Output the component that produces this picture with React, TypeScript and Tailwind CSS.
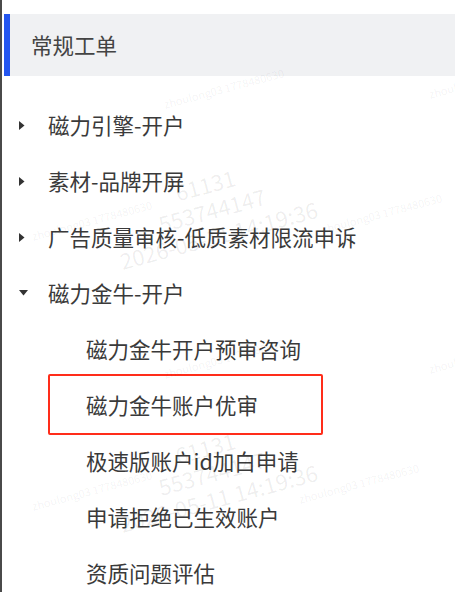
const font = { fontFamily: '"Noto Sans CJK SC", "Noto Sans", sans-serif' };

const groups = [
  { title: '磁力引擎-开户', open: false },
  { title: '素材-品牌开屏', open: false },
  { title: '广告质量审核-低质素材限流申诉', open: false },
  { title: '磁力金牛-开户', open: true },
];

const subItems = ['磁力金牛开户预审咨询', '磁力金牛账户优审', '极速版账户id加白申请', '申请拒绝已生效账户', '资质问题评估'];

function Caret({ open }: { open: boolean }) {
  return open ? (
    <svg width="9" height="6" viewBox="0 0 9 6" className="text-[#333]">
      <path d="M0 0 H9 L4.5 5.5 Z" fill="currentColor" />
    </svg>
  ) : (
    <svg width="6" height="9" viewBox="0 0 6 9" className="text-[#333]">
      <path d="M0 0 V9 L5.5 4.5 Z" fill="currentColor" />
    </svg>
  );
}

// 水印
function SmallMark({ x, y }: { x: number; y: number }) {
  return (
    <span
      className="absolute whitespace-nowrap text-[11px] text-black/[0.06] -rotate-[15deg]"
      style={{ left: x, top: y }}
    >
      zhoulong03 1778480630
    </span>
  );
}

function BigMark({ x, y }: { x: number; y: number }) {
  return (
    <div
      className="absolute flex flex-col items-center text-[22px] leading-[26px] text-black/[0.07] -rotate-[15deg] whitespace-nowrap"
      style={{ left: x, top: y }}
    >
      <span>61131</span>
      <span>553744147</span>
      <span>2026-05-11 14:19:36</span>
    </div>
  );
}

export default function App() {
  return (
    <div className="relative h-[592px] w-full overflow-hidden border-l-2 border-[#4a4a4a] bg-white" style={font}>
      <div className="ml-[2px] mt-[14px] flex h-[62px] items-center border-l-[6px] border-[#2456f0] bg-[#f0f1f3] pl-[21px]">
        <span className="text-[21.5px] text-[#444]">常规工单</span>
      </div>

      <div className="mt-[21px]">
        {groups.map((g) => (
          <div key={g.title} className="flex h-14 items-center">
            <div className="flex w-[46px] items-center pl-[17px]">
              <Caret open={g.open} />
            </div>
            <span className="text-[21.5px] text-[#3a3a3a]">{g.title}</span>
          </div>
        ))}
        {subItems.map((s, i) => (
          <div key={s} className="relative flex h-14 items-center pl-[84px]">
            <span className="text-[21.5px] text-[#3a3a3a]">{s}</span>
            {i === 1 && (
              <div className="absolute left-[46px] top-[-3px] h-[61px] w-[275px] rounded-[2px] border-2 border-[#ff2d1a]" />
            )}
          </div>
        ))}
      </div>

      <div className="pointer-events-none absolute inset-0" style={font}>
        <SmallMark x={160} y={80} />
        <SmallMark x={425} y={70} />
        <SmallMark x={28} y={212} />
        <SmallMark x={318} y={205} />
        <SmallMark x={160} y={350} />
        <SmallMark x={425} y={345} />
        <SmallMark x={28} y={482} />
        <SmallMark x={295} y={475} />
        <BigMark x={108} y={170} />
        <BigMark x={108} y={433} />
      </div>
    </div>
  );
}
